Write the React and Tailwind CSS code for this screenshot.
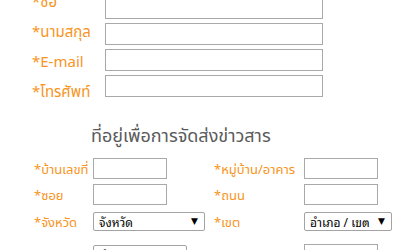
const Field = ({ w = 'w-[74px]' }) => (
  <input type="text" className={`${w} h-[21px] border border-[#a9a9a9] bg-white outline-none`} />
);

const Select = ({ value, w }) => (
  <div className={`${w} h-[19px] flex items-center justify-between pl-[5px] pr-[6px] border border-[#a3a3a3] rounded-[2px] bg-white font-['Noto_Sans_Thai_Looped',sans-serif] text-[12px] text-black leading-none whitespace-nowrap`}>
    <span>{value}</span>
    <span className="text-[9px] font-['DejaVu_Sans',sans-serif]">▼</span>
  </div>
);

const Label = ({ children }) => (
  <span className="text-[13px] leading-none text-[#f7941d] whitespace-nowrap pt-[3px]">*{children}</span>
);

const topFields = ['ชื่อ', 'นามสกุล', 'E-mail', 'โทรศัพท์'];

export default function App() {
  return (
    <div className="w-[418px] h-[250px] overflow-hidden bg-white font-['Noto_Sans_Thai',sans-serif]">
      {/* personal info */}
      <div className="flex items-start">
        <div className="flex flex-col w-[73px] ml-[32px] mt-[-12px]">
          {topFields.map((f) => (
            <span key={f} className="h-[30px] leading-[30px] text-[15px] text-[#f7941d] whitespace-nowrap">*{f}</span>
          ))}
        </div>
        <div className="flex flex-col gap-[4px] mt-[-3px]">
          {topFields.map((f) => (
            <input key={f} type="text" className="w-[218px] h-[22px] border border-[#a9a9a9] bg-white outline-none" />
          ))}
        </div>
      </div>

      {/* address */}
      <h2 className="ml-[91px] mt-[16px] text-[18px] leading-[26px] text-[#5a5a5a] whitespace-nowrap">ที่อยู่เพื่อการจัดส่งข่าวสาร</h2>

      <div className="flex flex-col pl-[34px] mt-[8px]">
        <div className="grid grid-cols-[59px_121px_90px_auto] items-center">
          <Label>บ้านเลขที่</Label>
          <Field />
          <Label>หมู่บ้าน/อาคาร</Label>
          <Field />
        </div>
        <div className="grid grid-cols-[59px_121px_90px_auto] items-center mt-[5px]">
          <Label>ซอย</Label>
          <Field />
          <Label>ถนน</Label>
          <Field />
        </div>
        <div className="grid grid-cols-[59px_121px_90px_auto] items-center mt-[7px]">
          <Label>จังหวัด</Label>
          <Select value="จังหวัด" w="w-[112px]" />
          <Label>เขต</Label>
          <Select value="อำเภอ / เขต" w="w-[88px]" />
        </div>
        <div className="grid grid-cols-[59px_121px_90px_auto] items-center mt-[13px]">
          <Label>แขวง</Label>
          <Select value="ตำบล / แขวง" w="w-[94px]" />
          <Label>รหัสไปรษณีย์</Label>
          <Field />
        </div>
      </div>
    </div>
  );
}
